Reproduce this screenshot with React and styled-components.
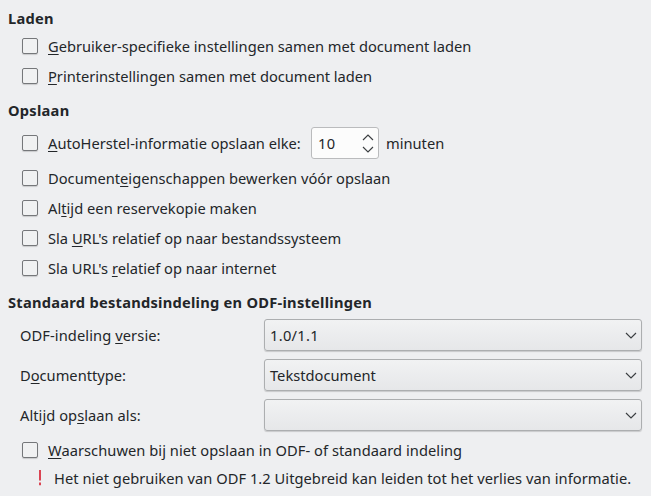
import React from "react";
import styled, { createGlobalStyle, css } from "styled-components";

const GlobalStyle = createGlobalStyle`
  *, *::before, *::after { box-sizing: border-box; }
  body {
    margin: 0;
    background: #eeeff1;
    color: #232629;
    font: 14.667px/20px "Noto Sans", sans-serif;
  }
`;

const Page = styled.main`
  display: flex;
  flex-direction: column;
  width: 651px;
  height: 496px;
  padding-top: 3px;
  overflow: hidden;
  background: #eeeff1;
  white-space: nowrap;
`;

const Heading = styled.h2`
  display: flex;
  align-items: center;
  height: ${(p) => p.$height}px;
  margin: 0;
  padding: 1px 0 0 8px;
  font-size: 14.667px;
  font-weight: 700;
  letter-spacing: 0.25px;
`;

const CheckRow = styled.label`
  display: flex;
  align-items: center;
  height: 30px;
  padding-left: 22px;
`;

const AutoSaveRow = styled(CheckRow)`
  height: 32px;
  margin-bottom: 4px;
`;

const Box = styled.input.attrs({ type: "checkbox" })`
  appearance: none;
  flex: none;
  width: 16px;
  height: 16px;
  margin: 0 10px 0 0;
  border: 1px solid #75777a;
  border-radius: 2px;
  background: #f0f1f2;
  box-shadow: 0 1px 1px rgba(0, 0, 0, 0.16);
`;

const Text = styled.span`
  letter-spacing: ${(p) => p.$spacing || 0}px;
`;

const Key = styled.span`
  text-decoration: underline;
  text-decoration-thickness: 1px;
  text-underline-offset: 2px;
  text-decoration-skip-ink: none;
`;

const AutoSave = styled.span`
  display: flex;
  align-items: center;
  justify-content: space-between;
  flex: none;
  width: 331px;
  margin-right: 7px;
`;

const SpinBox = styled.span`
  display: flex;
  align-items: center;
  justify-content: space-between;
  flex: none;
  width: 68px;
  height: 32px;
  padding: 0 4px 0 6px;
  border: 1px solid #babbbd;
  border-radius: 3px;
  background: #fcfcfc;
`;

const Arrows = styled.span`
  display: flex;
  flex-direction: column;
  gap: 5px;
`;

const ChevronSvg = styled.svg`
  display: block;
  flex: none;
  fill: none;
  stroke: #3b3e41;
  stroke-width: 1.15;
  ${(p) =>
    p.$up &&
    css`
      transform: scaleY(-1);
    `}
`;

const Fields = styled.div`
  display: grid;
  grid-template-columns: 244px 378px;
  grid-auto-rows: 32px;
  row-gap: 8px;
  align-items: center;
  padding-left: 20px;
  margin-bottom: 4px;
`;

const Select = styled.div`
  display: flex;
  align-items: center;
  justify-content: space-between;
  height: 32px;
  padding: 0 4px 0 5px;
  border: 1px solid #acaeb0;
  border-radius: 3px;
  background: linear-gradient(#f1f2f3, #e6e7e9);
  box-shadow: 0 1px 1px rgba(0, 0, 0, 0.16);
`;

const Warning = styled.div`
  display: flex;
  align-items: center;
  height: 26px;
  padding-left: 38px;
  gap: 12px;
`;

const Mark = styled.svg`
  display: block;
  flex: none;
  fill: #da4453;
`;

function Chevron({ up }) {
  return (
    <ChevronSvg width="12" height="7" viewBox="0 0 12 7" $up={up}>
      <path d="M1 1 6 6 11 1" />
    </ChevronSvg>
  );
}

function Mnemonic({ text, spacing }) {
  const [before, key, after] = text.split("_");
  return (
    <Text $spacing={spacing}>
      {before}
      <Key>{key}</Key>
      {after}
    </Text>
  );
}

function Option({ text, spacing }) {
  return (
    <CheckRow>
      <Box />
      <Mnemonic text={text} spacing={spacing} />
    </CheckRow>
  );
}

function Field({ label, value, spacing, valueSpacing }) {
  return (
    <>
      <Mnemonic text={label} spacing={spacing} />
      <Select>
        <Text $spacing={valueSpacing}>{value}</Text>
        <Chevron />
      </Select>
    </>
  );
}

export default function App() {
  return (
    <>
      <GlobalStyle />
      <Page>
        <Heading $height={28}>Laden</Heading>
        <Option text="_G_ebruiker-specifieke instellingen samen met document laden" />
        <Option
          text="_P_rinterinstellingen samen met document laden"
          spacing={-0.02}
        />

        <Heading $height={36}>Opslaan</Heading>
        <AutoSaveRow as="div">
          <Box />
          <AutoSave>
            <Mnemonic text="_A_utoHerstel-informatie opslaan elke:" />
            <SpinBox>
              <Text $spacing={0.3}>10</Text>
              <Arrows>
                <Chevron up />
                <Chevron />
              </Arrows>
            </SpinBox>
          </AutoSave>
          <Text>minuten</Text>
        </AutoSaveRow>
        <Option text="Document_e_igenschappen bewerken vóór opslaan" spacing={0.01} />
        <Option text="Al_t_ijd een reservekopie maken" spacing={0.03} />
        <Option text="Sla _U_RL's relatief op naar bestandssysteem" />
        <Option text="Sla URL's _r_elatief op naar internet" />

        <Heading $height={36}>
          Standaard bestandsindeling en ODF-instellingen
        </Heading>
        <Fields>
          <Field
            label="ODF-indeling _v_ersie:"
            value="1.0/1.1"
            spacing={0.09}
            valueSpacing={0.3}
          />
          <Field label="D_o_cumenttype:" value="Tekstdocument" />
          <Field label="Altijd op_s_laan als:" value="" spacing={0.05} />
        </Fields>
        <Option
          text="_W_aarschuwen bij niet opslaan in ODF- of standaard indeling"
          spacing={0.05}
        />
        <Warning>
          <Mark width="4" height="16" viewBox="0 0 4 16">
            <path d="M1 0H3V10.5H1ZM1 12.5H3V15.3H1Z" />
          </Mark>
          <Text $spacing={0.045}>
            Het niet gebruiken van ODF 1.2 Uitgebreid kan leiden tot het verlies van informatie.
          </Text>
        </Warning>
      </Page>
    </>
  );
}
